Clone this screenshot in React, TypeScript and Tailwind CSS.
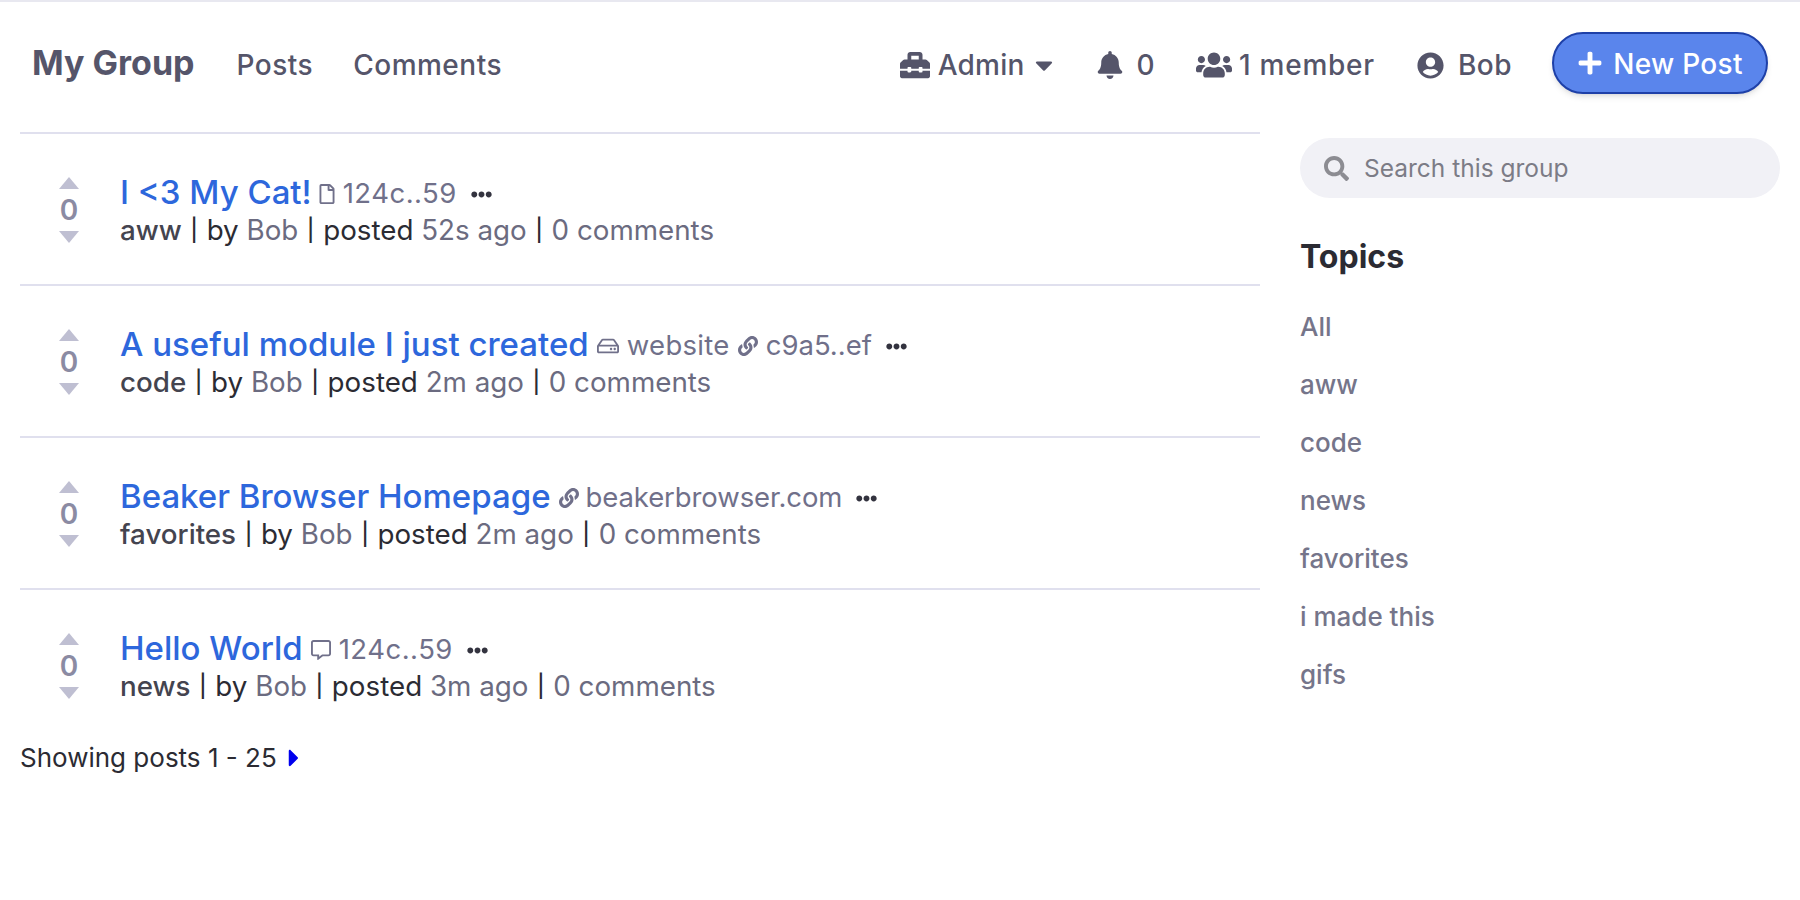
import { FaBell, FaCaretDown, FaCaretRight, FaEllipsisH, FaLink, FaPlus, FaRegCommentAlt, FaRegFile, FaRegHdd, FaSearch, FaToolbox, FaUserCircle, FaUsers } from 'react-icons/fa';
import type { ReactNode } from 'react';

const posts: { title: string; meta: ReactNode; topic: string; age: string }[] = [
  {
    title: 'I <3 My Cat!',
    topic: 'aww',
    age: '52s ago',
    meta: (
      <>
        <FaRegFile size={20} className="-ml-[3px]" />
        <span className="ml-[6px] tracking-[0.5px]">124c..59</span>
      </>
    ),
  },
  {
    title: 'A useful module I just created',
    topic: 'code',
    age: '2m ago',
    meta: (
      <>
        <FaRegHdd size={22} />
        <span className="ml-[8px] tracking-[0.3px]">website</span>
        <FaLink size={20} className="ml-[8px]" />
        <span className="ml-[8px]">c9a5..ef</span>
      </>
    ),
  },
  {
    title: 'Beaker Browser Homepage',
    topic: 'favorites',
    age: '2m ago',
    meta: (
      <>
        <FaLink size={20} />
        <span className="ml-[7px] tracking-[-0.1px]">beakerbrowser.com</span>
      </>
    ),
  },
  {
    title: 'Hello World',
    topic: 'news',
    age: '3m ago',
    meta: (
      <>
        <FaRegCommentAlt size={20} />
        <span className="ml-[8px] tracking-[0.5px]">124c..59</span>
      </>
    ),
  },
];

const topics = ['All', 'aww', 'code', 'news', 'favorites', 'i made this', 'gifs'];

// the bar is shorter in the reference than Inter's own glyph
const Pipe = () => <span className="inline-block scale-y-[0.8]">|</span>;

const Post = ({ post }: { post: (typeof posts)[number] }) => (
  <div className="flex h-[152px] items-center border-t-2 border-[#e0e0ee] pt-[2px] pl-[39px]">
    {/* Votes */}
    <div className="flex w-[61px] flex-col items-start">
      <span className="h-0 w-0 border-x-[10px] border-b-[12px] border-x-transparent border-b-[#bfbfd2]" />
      <span className="my-[6px] w-[20px] text-center text-[28px] leading-[30px] font-semibold text-[#8b8ba3]">0</span>
      <span className="h-0 w-0 border-x-[10px] border-t-[12px] border-x-transparent border-t-[#bfbfd2]" />
    </div>

    <div>
      <div className="flex h-[38px] items-center">
        <a className="text-[33px] leading-[38px] font-medium text-[#2d67dc]">{post.title}</a>
        <div className="mt-[5px] ml-2 flex items-center text-[27.5px] text-[#70708a]">{post.meta}</div>
        <FaEllipsisH size={21} className="mt-[5px] ml-[14px] text-[#33333f]" />
      </div>
      <div className="mt-[1px] text-[27.75px] leading-[36px] text-[#2b2b33]">
        <span className="font-medium text-[#44444f]">{post.topic}</span> <Pipe /> by{' '}
        <span className="text-[#6b6b80]">Bob</span> <Pipe /> posted <span className="text-[#6b6b80]">{post.age}</span>{' '}
        <Pipe /> <span className="text-[#6b6b80]">0 comments</span>
      </div>
    </div>
  </div>
);

export default function App() {
  return (
    <div className="min-h-[900px] border-t-2 border-[#e8e8f0] bg-white font-['Inter',sans-serif]">
      {/* Header */}
      <nav className="flex h-[130px] items-center px-8 pb-[4px] text-[28px] font-medium tracking-[0.5px] text-[#55556a]">
        <a className="-mt-[5px] text-[34px] font-bold tracking-normal">My Group</a>
        <a className="ml-[42px]">Posts</a>
        <a className="ml-10">Comments</a>

        <div className="ml-auto flex items-center">
          <FaToolbox size={30} />
          <span className="ml-[8px] tracking-[0.2px]">Admin</span>
          <FaCaretDown size={28} className="ml-[6px]" />
          <FaBell size={28} className="ml-[38px]" />
          <span className="ml-[12px]">0</span>
          <FaUsers size={36} className="ml-[41px]" />
          <span className="ml-[7px] tracking-[0.75px]">1 member</span>
          <FaUserCircle size={27} className="ml-[42px]" />
          <span className="ml-[14px]">Bob</span>
          <button className="mb-[4px] ml-10 flex h-[62px] w-[216px] items-center justify-center gap-[10px] rounded-full border-2 border-[#1e40a8] bg-[#5a85ec] pt-[2px] tracking-[0.3px] text-white shadow-md">
            <FaPlus size={26} className="-mt-[2px]" />
            New Post
          </button>
        </div>
      </nav>

      <div className="flex pl-5 pr-5">
        {/* Feed */}
        <main className="w-[1240px]">
          {posts.map((post) => (
            <Post key={post.title} post={post} />
          ))}
          <div className="flex items-center text-[26px] leading-[36px] text-[#2b2b33]">
            Showing posts 1 - 25
            <FaCaretRight size={28} className="ml-[3px] text-[#0000ee]" />
          </div>
        </main>

        {/* Sidebar */}
        <aside className="ml-10 w-[480px] pt-[6px]">
          <div className="flex h-[60px] items-center rounded-full bg-[#f1f1f6] pl-6 text-[24.5px] text-[#7c7c86]">
            <FaSearch size={25} className="text-[#8c8c92]" />
            <span className="ml-[15px]">Search this group</span>
          </div>
          <h2 className="mt-[39px] text-[32px] leading-[40px] font-bold text-[#2b2b33]">Topics</h2>
          <ul className="mt-[21px] text-[26px] font-medium text-[#75758a]">
            {topics.map((topic) => (
              <li key={topic} className="h-[58px] leading-[58px]">
                {topic}
              </li>
            ))}
          </ul>
        </aside>
      </div>
    </div>
  );
}
